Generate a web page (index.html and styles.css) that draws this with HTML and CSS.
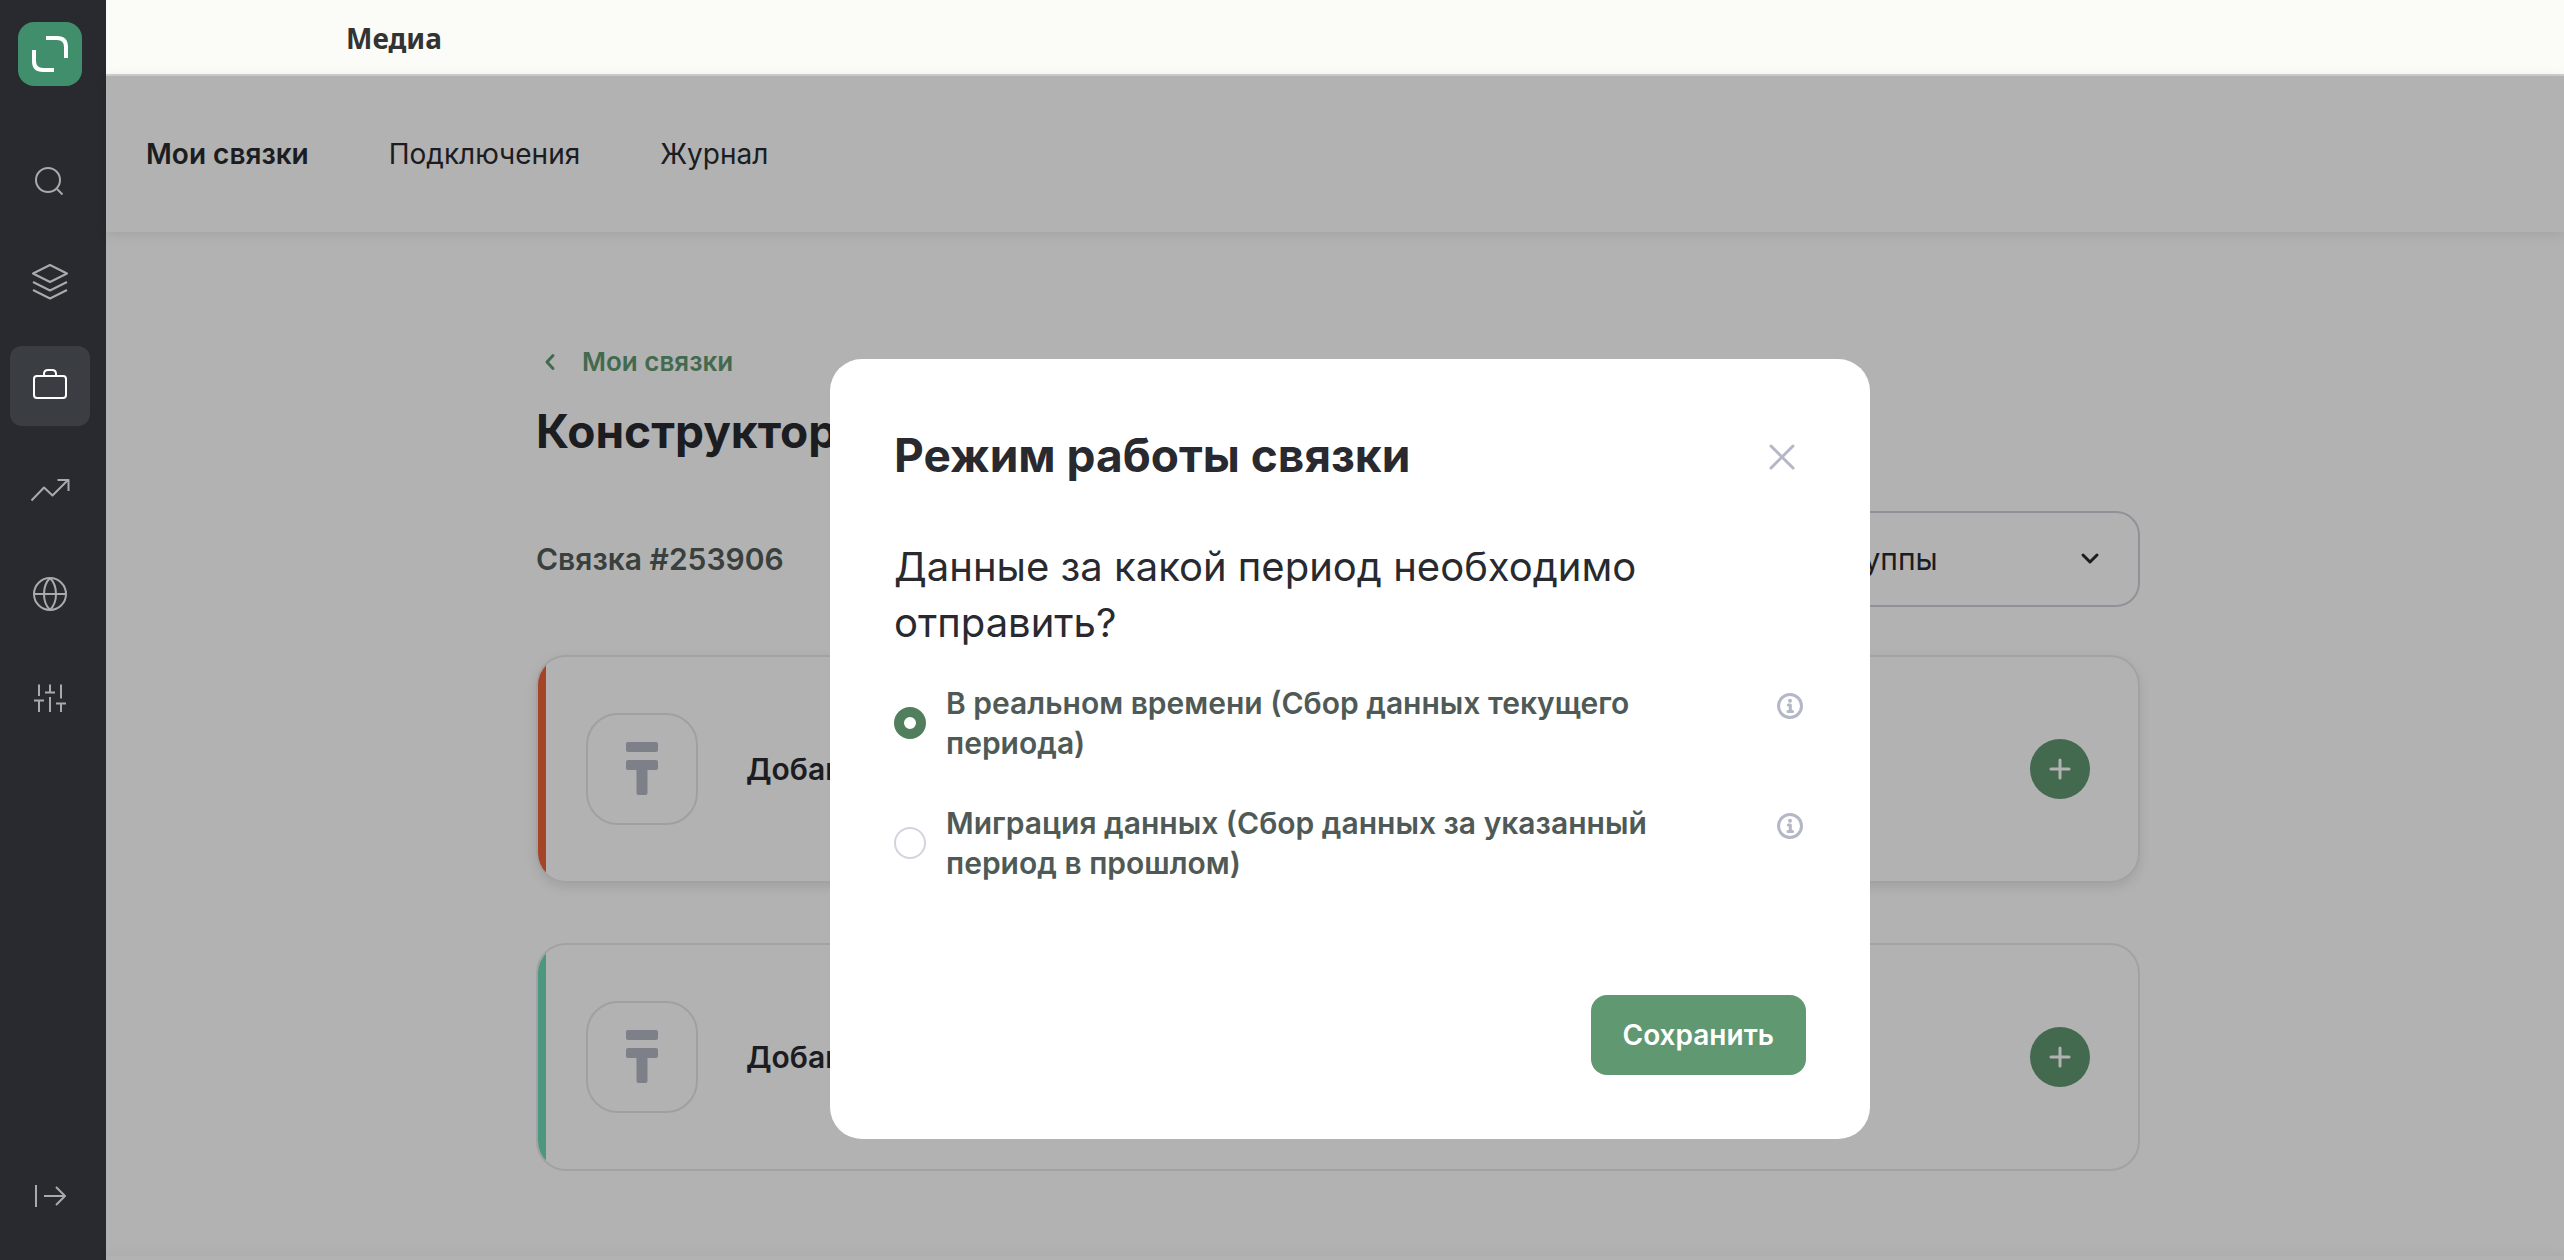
FILE: index.html
```html
<!DOCTYPE html>
<html lang="ru">
<head>
<meta charset="utf-8">
<meta name="viewport" content="width=device-width, initial-scale=1">
<title>Медиа — Мои связки</title>
<link rel="stylesheet" href="styles.css">
</head>
<body>
<div class="app">
  <aside class="sidebar">
    <a class="logo" href="#" aria-label="Главная">
      <svg width="64" height="64" viewBox="0 0 64 64" fill="none" stroke="#fff" stroke-width="4"><path d="M28 16h11q9 0 9 9v11M16 28v11q0 9 9 9h11"/></svg>
    </a>
    <nav class="side-nav" aria-label="Разделы">
      <a class="side-link" href="#" aria-label="Поиск"><svg class="icon" viewBox="0 0 40 40"><circle cx="18" cy="22" r="12"/><path d="M27 31l5.500 5.500"/></svg></a>
      <a class="side-link" href="#" aria-label="Слои"><svg class="icon" viewBox="0 0 40 40"><path d="M20 3l17 8.500-17 8.500-17-8.500zM3 20l17 8.500L37 20M3 28l17 8.500L37 28"/></svg></a>
      <a class="side-link side-link--active" href="#" aria-label="Связки" aria-current="page"><svg class="icon" viewBox="0 0 40 40"><rect x="4" y="10" width="32" height="22" rx="3"/><path d="M14 10V8q0-4 4-4h4q4 0 4 4v2"/></svg></a>
      <a class="side-link" href="#" aria-label="Аналитика"><svg class="icon" viewBox="0 0 40 40"><path d="M1.500 30.500L14 17.500l8.500 8L38 10M27.500 10H38.500v11"/></svg></a>
      <a class="side-link" href="#" aria-label="Сайты"><svg class="icon" viewBox="0 0 40 40"><circle cx="20" cy="20" r="16"/><path d="M4 20h32M20 4c-8 8-8 24 0 32M20 4c8 8 8 24 0 32"/></svg></a>
      <a class="side-link" href="#" aria-label="Настройки"><svg class="icon" viewBox="0 0 40 40"><path d="M9 6.500V18M9 22.500V34M4 22.500h10M20 6.500V14.500M15 14.500h10M20 19v15M31 6.500V20.500M31 25.500V34M26 25.500h10"/></svg></a>
    </nav>
    <button class="side-link side-toggle" type="button" aria-label="Развернуть меню"><svg class="icon" viewBox="0 0 40 40"><path d="M6 9v22M14 20h21M26 11l9 9-9 9"/></svg></button>
  </aside>

  <div class="page">
    <header class="topbar"><span class="topbar-title">Медиа</span></header>

    <div class="workspace">
      <nav class="tabs" aria-label="Меню раздела">
        <a class="tab tab--active" href="#">Мои связки</a>
        <a class="tab" href="#">Подключения</a>
        <a class="tab" href="#">Журнал</a>
      </nav>

      <div class="body">
        <main class="content">
          <a class="back" href="#"><svg width="28" height="28" viewBox="0 0 28 28" fill="none" stroke="currentColor" stroke-width="3" stroke-linecap="round" stroke-linejoin="round"><path d="M17 7.500L11 14l6 6.500"/></svg>Мои связки</a>
          <h1 class="heading">Конструктор</h1>
          <div class="bundle">
            <label class="bundle-name" for="group">Связка #253906</label>
            <div class="select-wrap">
              <select class="select" id="group"><option>Без группы</option></select>
              <svg class="select-arrow" viewBox="0 0 24 24"><path d="M5 8l7 7 7-7"/></svg>
            </div>
          </div>

          <section class="card card--source">
            <div class="card-icon"><svg width="32" height="54" viewBox="0 0 32 54"><rect width="32" height="10" rx="2"/><path d="M2 18h28q2 0 2 2v6q0 2-2 2h-8.500v23q0 2-2 2h-7q-2 0-2-2V28H2q-2 0-2-2v-6q0-2 2-2z"/></svg></div>
            <h2 class="card-title">Добавить</h2>
            <button class="add" type="button" aria-label="Добавить источник"><svg class="plus" viewBox="0 0 24 24"><path d="M12 3v18M3 12h18"/></svg></button>
          </section>
          <section class="card card--target">
            <div class="card-icon"><svg width="32" height="54" viewBox="0 0 32 54"><rect width="32" height="10" rx="2"/><path d="M2 18h28q2 0 2 2v6q0 2-2 2h-8.500v23q0 2-2 2h-7q-2 0-2-2V28H2q-2 0-2-2v-6q0-2 2-2z"/></svg></div>
            <h2 class="card-title">Добавить</h2>
            <button class="add" type="button" aria-label="Добавить приёмник"><svg class="plus" viewBox="0 0 24 24"><path d="M12 3v18M3 12h18"/></svg></button>
          </section>
        </main>
      </div>
      <footer class="footer"></footer>

      <div class="overlay">
        <form class="modal" role="dialog" aria-modal="true" aria-labelledby="modal-title">
          <div class="modal-head">
            <h2 class="modal-title" id="modal-title">Режим работы связки</h2>
            <button class="close" type="button" aria-label="Закрыть"><svg width="32" height="32" viewBox="0 0 32 32"><path d="M5 7l22 22M27 7L5 29"/></svg></button>
          </div>
          <fieldset class="modes">
            <legend class="question">Данные за какой период необходимо отправить?</legend>
            <div class="mode">
              <input class="radio" type="radio" name="mode" id="realtime" checked>
              <label class="mode-label" for="realtime">В реальном времени (Сбор данных текущего периода)</label>
              <svg class="info" viewBox="0 0 32 32" aria-hidden="true"><circle cx="16" cy="16" r="11.500"/><circle class="info-dot" cx="16" cy="10.800" r="2"/><path d="M14.300 15h2v6M14 21.500h4.500"/></svg>
            </div>
            <div class="mode">
              <input class="radio" type="radio" name="mode" id="migration">
              <label class="mode-label" for="migration">Миграция данных (Сбор данных за указанный период в прошлом)</label>
              <svg class="info" viewBox="0 0 32 32" aria-hidden="true"><circle cx="16" cy="16" r="11.500"/><circle class="info-dot" cx="16" cy="10.800" r="2"/><path d="M14.300 15h2v6M14 21.500h4.500"/></svg>
            </div>
          </fieldset>
          <div class="modal-foot"><button class="save" type="submit">Сохранить</button></div>
        </form>
      </div>
    </div>
  </div>
</div>
</body>
</html>
```
FILE: styles.css
```css
*, *::before, *::after { box-sizing: border-box; }

body {
  margin: 0;
  background: #fff;
  color: #292a2f;
  font-family: Inter, "Liberation Sans", sans-serif;
  font-size: 28px;
}

a { color: inherit; text-decoration: none; }
button { border: 0; padding: 0; background: none; color: inherit; font: inherit; cursor: pointer; }
h1, h2 { margin: 0; }

.app { display: flex; min-height: 100vh; }

/* Sidebar */
.sidebar {
  display: flex;
  flex: none;
  flex-direction: column;
  align-items: flex-start;
  width: 106px;
  padding: 22px 10px 24px;
  background: #292a2f;
}
.logo { display: block; width: 64px; height: 64px; margin: 0 8px 52px; border-radius: 16px; background: #418e6c; }
.logo svg { display: block; }
.side-nav { display: flex; flex-direction: column; gap: 24px; }
.side-link { display: grid; place-items: center; width: 80px; height: 80px; border-radius: 12px; color: #a9aaac; }
.side-link--active { background: #3a3d42; color: #fff; }
.side-toggle { margin-top: auto; }
.icon { width: 40px; height: 40px; fill: none; stroke: currentColor; stroke-width: 2; stroke-linejoin: round; }

/* Page */
.page { display: flex; flex: 1; flex-direction: column; min-width: 0; }
.topbar { display: flex; align-items: center; height: 76px; padding: 2px 240px 0; border-bottom: 2px solid #d0d1cf; background: #fbfcf7; }
.topbar-title { color: #333; font-family: "Noto Sans", sans-serif; font-size: 28px; font-weight: 700; line-height: 40px; }

.workspace { position: relative; display: flex; flex: 1; flex-direction: column; }

.tabs { display: flex; gap: 80px; align-items: center; height: 156px; padding: 0 40px; box-shadow: 0 2px 12px rgba(0, 0, 0, .1); }
.tab { line-height: 40px; }
.tab--active { font-weight: 600; }

.body { padding: 110px 0 80px 6px; }
.content { max-width: 1604px; margin: 0 auto; }
.back { display: inline-flex; gap: 18px; align-items: center; color: #609971; font-size: 26px; font-weight: 600; line-height: 40px; }
.heading { margin-top: 16px; font-size: 46px; font-weight: 700; line-height: 64px; }
.bundle { display: flex; justify-content: space-between; align-items: center; margin: 48px 0; }
.bundle-name { color: #525c59; font-size: 30px; font-weight: 600; line-height: 40px; }
.select-wrap { position: relative; width: 410px; }
.select {
  width: 100%;
  height: 96px;
  padding: 0 40px;
  border: 2px solid #cdd2d9;
  border-radius: 24px;
  background: #fff;
  color: #292a2f;
  font: 30px Inter, "Liberation Sans", sans-serif;
  appearance: none;
}
.select-arrow { position: absolute; top: 36px; right: 38px; width: 24px; height: 24px; fill: none; stroke: #292a2f; stroke-width: 3; stroke-linecap: round; stroke-linejoin: round; pointer-events: none; }

.card {
  display: flex;
  align-items: center;
  height: 228px;
  padding: 0 48px 0 40px;
  overflow: hidden;
  border: 2px solid #e9e9ea;
  border-radius: 30px;
}
.card::before { content: ""; align-self: stretch; width: 8px; margin: 0 40px 0 -40px; background: var(--stripe); }
.card + .card { margin-top: 60px; }
.card--source { --stripe: #ec6239; box-shadow: 0 4px 12px rgba(0, 0, 0, .1); }
.card--target { --stripe: #6fd8b9; }
.card-icon { display: grid; place-items: center; width: 112px; height: 112px; border: 2px solid #e6e6ea; border-radius: 32px; }
.card-icon svg { fill: #b3b7c4; }
.card-title { margin-left: 48px; font-size: 30px; font-weight: 600; line-height: 40px; }
.add { display: grid; place-items: center; width: 60px; height: 60px; margin-left: auto; border-radius: 50%; background: #609971; }
.plus { width: 24px; height: 24px; fill: none; stroke: #fff; stroke-width: 3; stroke-linecap: round; }

.footer { height: 4px; margin-top: auto; box-shadow: 0 0 12px rgba(0, 0, 0, .1); }

/* Dialog */
.overlay {
  position: absolute;
  inset: 0;
  display: flex;
  justify-content: center;
  align-items: flex-start;
  padding: 283px 0 0 30px;
  overflow: hidden;
  background: rgba(0, 0, 0, .3);
}
.modal { width: 1040px; max-width: 100%; padding: 64px; border-radius: 32px; background: #fff; }
.modal-head { display: flex; justify-content: space-between; align-items: center; padding-right: 8px; }
.modal-title { font-size: 46px; font-weight: 700; line-height: 64px; }
.close svg { display: block; fill: none; stroke: #b3b7c6; stroke-width: 3; stroke-linecap: round; }
.modes { min-width: 0; margin: 52px 0 0; padding: 0; border: 0; }
.question { padding: 0 120px 32px 0; font-size: 40px; line-height: 56px; }
.mode { display: flex; align-items: center; }
.mode + .mode { margin-top: 40px; }
.radio { flex: none; width: 32px; height: 32px; margin: 0 20px 0 0; border: 2px solid #d2d3de; border-radius: 50%; background: #fff; appearance: none; }
.radio:checked { border: 10px solid #517f5d; }
.mode-label { flex: 1; padding-right: 120px; color: #4f5a57; font-size: 30px; font-weight: 600; line-height: 40px; }
.info { align-self: flex-start; width: 32px; height: 32px; margin-top: 7px; fill: none; stroke: #b3b7c6; stroke-width: 3; stroke-linecap: round; stroke-linejoin: round; }
.info-dot { fill: #b3b7c6; stroke: none; }
.modal-foot { display: flex; justify-content: flex-end; margin-top: 112px; }
.save { height: 80px; padding: 0 32px; border-radius: 16px; background: #609871; color: #fff; font-weight: 600; line-height: 40px; }
```
